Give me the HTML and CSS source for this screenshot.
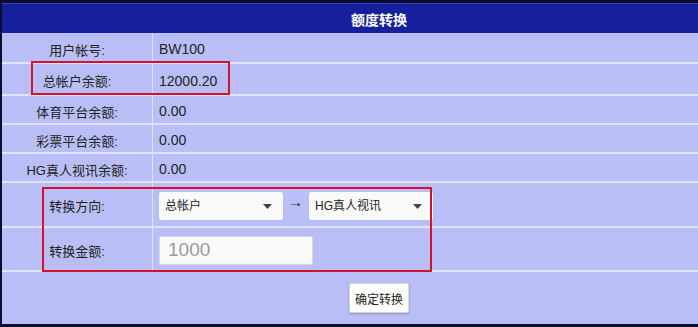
FILE: index.html
```html
<!DOCTYPE html>
<html lang="zh-CN">
<head>
    <meta charset="UTF-8">
    <title>额度转换</title>
    <link rel="stylesheet" href="styles.css">
</head>
<body>
    <div class="panel">
        <table class="form">
            <tr>
                <th colspan="2" class="title">额度转换</th>
            </tr>
            <tr class="first">
                <td class="label">用户帐号:</td>
                <td class="value">BW100</td>
            </tr>
            <tr class="wide">
                <td class="label">总帐户余额:</td>
                <td class="value">12000.20</td>
            </tr>
            <tr>
                <td class="label">体育平台余额:</td>
                <td class="value">0.00</td>
            </tr>
            <tr>
                <td class="label">彩票平台余额:</td>
                <td class="value">0.00</td>
            </tr>
            <tr>
                <td class="label">HG真人视讯余额:</td>
                <td class="value">0.00</td>
            </tr>
            <tr class="tall">
                <td class="label">转换方向:</td>
                <td class="value">
                    <div class="direction">
                        <span class="select">
                            <select>
                                <option>总帐户</option>
                            </select>
                            <svg class="caret" width="9" height="5" viewBox="0 0 9 5"><path d="M0 0h9L4.5 5z" fill="#444"/></svg>
                        </span>
                        <span class="arrow">→</span>
                        <span class="select">
                            <select>
                                <option>HG真人视讯</option>
                            </select>
                            <svg class="caret" width="9" height="5" viewBox="0 0 9 5"><path d="M0 0h9L4.5 5z" fill="#444"/></svg>
                        </span>
                    </div>
                </td>
            </tr>
            <tr class="amount">
                <td class="label">转换金额:</td>
                <td class="value"><input type="text" placeholder="1000"></td>
            </tr>
            <tr class="actions">
                <td colspan="2"><button>确定转换</button></td>
            </tr>
        </table>
        <div class="mark mark-balance"></div>
        <div class="mark mark-transfer"></div>
    </div>
</body>
</html>
```

FILE: styles.css
```css
body {
    margin: 0;
    background-color: #0c0c33;
    overflow: hidden;
    font-family: "Liberation Sans", Arial, "Noto Sans CJK SC", sans-serif;
}
.panel {
    position: relative;
    width: 754px;
    border-top: 3px solid #0c0c33;
    border-left: 2px solid #0c0c33;
    border-bottom: 3px solid #0c0c33;
    background-color: #b9bff6;
}
.form {
    width: 100%;
    border-collapse: collapse;
    color: #222;
    font-size: 13px;
}
.form td {
    height: 24px;
    padding: 3px 0 0 0;
    border-bottom: 2px solid #dfe2fb;
}
.title {
    height: 29px;
    padding: 0;
    background-color: #17209c;
    border-top: 1px solid #3a44b8;
    color: #fff;
    font-size: 14px;
    font-weight: bold;
    text-align: center;
    font-family: "Noto Sans CJK SC", serif;
}
.form td.label {
    width: 150px;
    text-align: center;
    border-right: 1px solid #dfe2fb;
}
.form td.value {
    padding-left: 6px;
    font-size: 14px;
}
.form tr.first td {
    height: 26px;
}
.form tr.wide td {
    height: 27px;
}
.form tr.tall td {
    height: 41px;
    padding-top: 2px;
}
.form tr.amount td {
    height: 40px;
    padding-top: 2px;
}
.form tr.actions td {
    height: 52px;
    padding: 0;
    border-bottom: none;
    text-align: center;
}
.direction {
    display: flex;
    align-items: center;
}
.select {
    position: relative;
    display: inline-block;
}
.select select {
    appearance: none;
    -webkit-appearance: none;
    width: 124px;
    height: 28px;
    padding: 0 6px;
    border: none;
    border-radius: 2px;
    background-color: #fafafa;
    color: #222;
    font-size: 12px;
    font-family: "Liberation Sans", Arial, "Noto Sans CJK SC", sans-serif;
    box-shadow: 0 0 1px rgba(0,0,0,0.15);
}
.caret {
    position: absolute;
    right: 11px;
    top: 12px;
}
.arrow {
    margin: 0 6px 0 5px;
    font-size: 15px;
    font-weight: bold;
    position: relative;
    top: -4px;
}
input {
    width: 154px;
    height: 29px;
    box-sizing: border-box;
    padding: 0 8px;
    border: 1px solid #d6d8e4;
    border-radius: 2px;
    background-color: #fafafa;
    font-size: 19px;
    font-family: "Liberation Sans", Arial, sans-serif;
}
input::placeholder {
    color: #9b9b9b;
}
button {
    width: 60px;
    height: 30px;
    padding: 0;
    white-space: nowrap;
    border: 1px solid #d8d8d8;
    border-radius: 2px;
    background-color: #fff;
    color: #222;
    font-size: 12px;
    font-family: "Noto Sans CJK SC", sans-serif;
    box-shadow: 0 1px 2px rgba(0,0,0,0.25);
}
.mark {
    position: absolute;
    border: 2px solid #d4132b;
}
.mark-balance {
    left: 29px;
    top: 58px;
    width: 195px;
    height: 30px;
}
.mark-transfer {
    left: 40px;
    top: 184px;
    width: 386px;
    height: 81px;
}
```
